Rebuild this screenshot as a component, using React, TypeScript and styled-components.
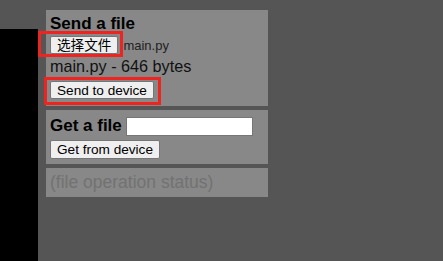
import styled, { createGlobalStyle } from 'styled-components'

const GlobalStyle = createGlobalStyle`
  html, body {
    margin: 0;
    padding: 0;
    background: #555555;
    font-family: "Liberation Sans", Arial, sans-serif;
  }
`

const Page = styled.div`
  display: flex;
  align-items: flex-start;
  gap: 8px;
  width: 443px;
  height: 261px;
  overflow: hidden;
`

const Terminal = styled.div`
  width: 38px;
  height: 240px;
  margin-top: 29px;
  background: #000;
`

const FileBoxes = styled.div`
  display: flex;
  flex-direction: column;
  gap: 4px;
  width: 222px;
  margin-top: 10px;
`

const FileBox = styled.div`
  background: #888888;
  padding: 4px;
`

const Title = styled.div`
  font-size: 17px;
  font-weight: bold;
  line-height: 20px;
  color: #000;
`

const Row = styled.div<{ $top?: number; $bottom?: number; $height?: number }>`
  display: flex;
  align-items: center;
  margin-top: ${(p) => p.$top ?? 0}px;
  margin-bottom: ${(p) => p.$bottom ?? 0}px;
  ${(p) => (p.$height ? `height: ${p.$height}px;` : '')}
`

const Button = styled.button<{ $height?: number }>`
  height: ${(p) => p.$height ?? 18}px;
  padding: 0 6px;
  margin: 0;
  background: #efefef;
  border: 1px solid #767676;
  border-radius: 2px;
  font-family: "Liberation Sans", "Noto Sans CJK SC", Arial, sans-serif;
  font-size: 13.6px;
  line-height: 15px;
  color: #000;
`

const Highlight = styled.span<{ $t: number; $r: number; $b: number; $l: number }>`
  position: relative;
  display: inline-flex;
  &::after {
    content: '';
    position: absolute;
    top: ${(p) => -p.$t}px;
    right: ${(p) => -p.$r}px;
    bottom: ${(p) => -p.$b}px;
    left: ${(p) => -p.$l}px;
    border: 3px solid #ee2420;
    pointer-events: none;
  }
`

const FileName = styled.span`
  margin-left: 5px;
  font-size: 13px;
  color: #222;
`

const Info = styled.div`
  margin-top: 1px;
  font-size: 16.2px;
  line-height: 23px;
  color: #111;
`

const NameInput = styled.input`
  width: 127px;
  height: 19px;
  box-sizing: border-box;
  margin: 0 0 0 4px;
  border: 1px solid #767676;
  background: #fff;
  padding: 1px 2px;
`

const Status = styled.div`
  font-size: 17.5px;
  line-height: 21px;
  color: #727272;
`

function App() {
  return (
    <Page>
      <GlobalStyle />
      <Terminal />
      <FileBoxes>
        <FileBox>
          <Title>Send a file</Title>
          <Row $top={2}>
            <Highlight $t={5} $r={5} $b={3} $l={12}>
              <Button>选择文件</Button>
            </Highlight>
            <FileName>main.py</FileName>
          </Row>
          <Info>main.py - 646 bytes</Info>
          <Row $top={3} $bottom={3}>
            <Highlight $t={4} $r={7} $b={6} $l={6}>
              <Button>Send to device</Button>
            </Highlight>
          </Row>
        </FileBox>
        <FileBox>
          <Row $height={24}>
            <Title>Get a file</Title>
            <NameInput />
          </Row>
          <Row $top={2} $bottom={1}>
            <Button $height={19}>Get from device</Button>
          </Row>
        </FileBox>
        <FileBox>
          <Status>(file operation status)</Status>
        </FileBox>
      </FileBoxes>
    </Page>
  )
}

export default App
